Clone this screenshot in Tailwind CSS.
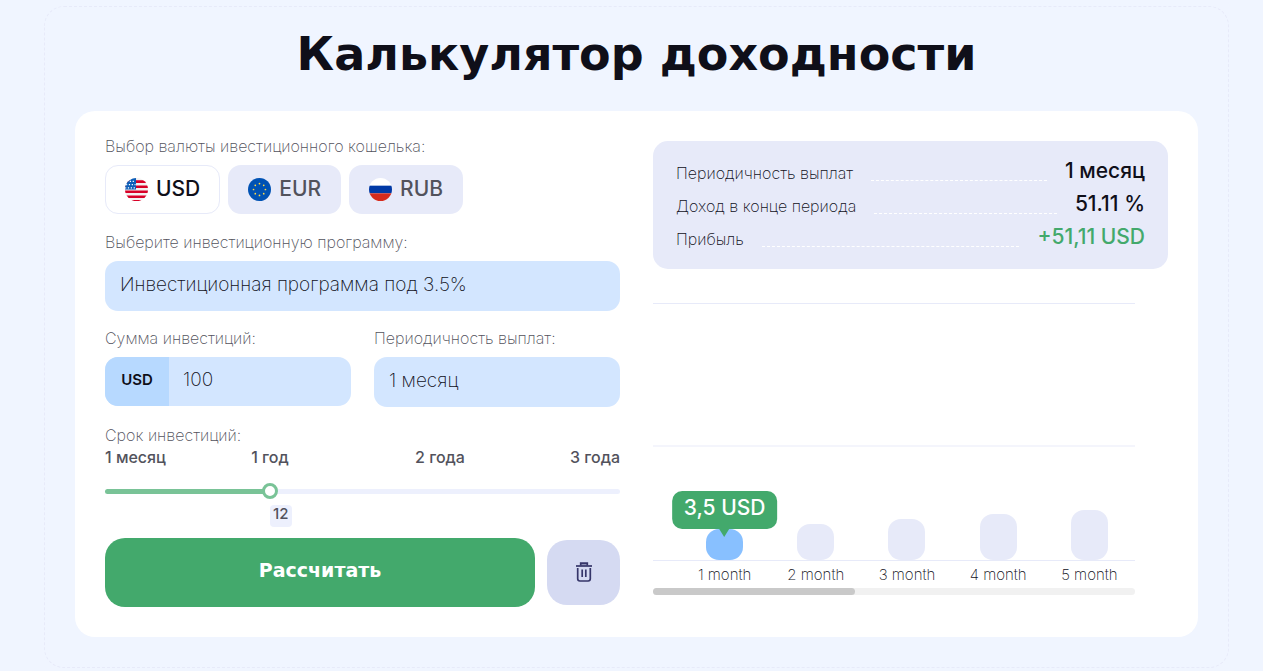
<!DOCTYPE html>
<html lang="ru">
<head>
  <meta charset="UTF-8" />
  <meta name="viewport" content="width=device-width, initial-scale=1.0" />
  <title>Калькулятор доходности</title>
  <script src="https://cdn.jsdelivr.net/npm/@tailwindcss/browser@4"></script>
</head>
<body class="bg-[#f0f5ff] min-h-screen font-['Inter',sans-serif] text-[#0f0f19] pt-[6px] pb-[3px] pl-11 pr-[34px]">

  <section class="border border-dashed border-[#e7eaf9] rounded-[20px] px-[30px] pb-[30px] pt-5">
    <h1 class="font-['DejaVu_Sans',sans-serif] font-bold text-[46px] leading-[54px] text-center mb-[30px]">Калькулятор доходности</h1>

    <div class="bg-white rounded-[20px] p-[30px] grid grid-cols-2 gap-[33px]">

      <!-- Form -->
      <form class="flex flex-col" onsubmit="return false">
        <fieldset>
          <legend class="font-extralight text-base leading-[10px] text-[#52525c] mb-[14px]">Выбор валюты ивестиционного кошелька:</legend>
          <div class="flex gap-2 text-[21px] font-medium">
            <label class="h-[49px] px-[19px] pb-[2px] flex items-center gap-2 rounded-[13px] border border-[#e7eaf9] cursor-pointer">
              <input type="radio" name="currency" value="USD" class="sr-only" checked />
              <svg class="w-[23px] h-[23px] mt-[2px]" viewBox="0 0 24 24">
                <clipPath id="us"><circle cx="12" cy="12" r="12" /></clipPath>
                <g clip-path="url(#us)">
                  <rect width="24" height="24" fill="#f3f0f0" />
                  <path d="M0 2.4h24v2.7H0zM0 7.7h24v2.7H0zM0 13h24v2.7H0zM0 18.2h24v2.7H0zM0 23h24v1H0z" fill="#d80027" />
                  <rect width="11.5" height="12" fill="#0d5eb8" />
                  <path d="M2 3.5h9M1 7h10M0 10.4h11" stroke="#fff" stroke-width="1.3" stroke-dasharray="1.3 1.7" />
                </g>
              </svg>
              USD
            </label>
            <label class="h-[49px] px-5 pb-[2px] flex items-center gap-2 rounded-[13px] bg-[#e7eaf9] text-[#52525c] cursor-pointer">
              <input type="radio" name="currency" value="EUR" class="sr-only" />
              <svg class="w-[23px] h-[23px] mt-[2px]" viewBox="0 0 24 24">
                <circle cx="12" cy="12" r="12" fill="#0052b4" />
                <g fill="#ffda44">
                  <circle cx="12" cy="5.8" r=".9" /><circle cx="16.4" cy="7.6" r=".9" />
                  <circle cx="18.2" cy="12" r=".9" /><circle cx="16.4" cy="16.4" r=".9" />
                  <circle cx="12" cy="18.2" r=".9" /><circle cx="7.6" cy="16.4" r=".9" />
                  <circle cx="5.8" cy="12" r=".9" /><circle cx="7.6" cy="7.6" r=".9" />
                </g>
              </svg>
              EUR
            </label>
            <label class="h-[49px] px-5 pb-[2px] flex items-center gap-2 rounded-[13px] bg-[#e7eaf9] text-[#52525c] cursor-pointer">
              <input type="radio" name="currency" value="RUB" class="sr-only" />
              <svg class="w-[23px] h-[23px] mt-[2px]" viewBox="0 0 24 24">
                <clipPath id="ru"><circle cx="12" cy="12" r="12" /></clipPath>
                <g clip-path="url(#ru)">
                  <rect width="24" height="24" fill="#fff" />
                  <rect y="8" width="24" height="8" fill="#0039a6" />
                  <rect y="16" width="24" height="8" fill="#d52b1e" />
                </g>
              </svg>
              RUB
            </label>
          </div>
        </fieldset>

        <label for="program" class="font-extralight text-base leading-[10px] text-[#52525c] mt-[23px] mb-[14px]">Выберите инвестиционную программу:</label>
        <select id="program" class="appearance-none h-[50px] px-[15px] pb-[2px] rounded-[13px] bg-[#d3e6ff] font-extralight text-[19px]">
          <option>Инвестиционная программа под 3.5%</option>
        </select>

        <div class="grid grid-cols-2 gap-[23px] mt-[22px]">
          <div class="flex flex-col">
            <label for="amount" class="font-extralight text-base leading-[10px] text-[#52525c] mb-[14px]">Сумма инвестиций:</label>
            <div class="flex h-[49px] rounded-[13px] overflow-hidden bg-[#d3e6ff]">
              <span class="w-16 shrink-0 pb-[2px] flex items-center justify-center bg-[#b7d9ff] font-semibold text-[15px]">USD</span>
              <input id="amount" type="text" value="100" class="w-full min-w-0 px-[14px] pb-[2px] font-extralight text-[19px] outline-none" />
            </div>
          </div>
          <div class="flex flex-col">
            <label for="period" class="font-extralight text-base leading-[10px] text-[#52525c] mb-[14px]">Периодичность выплат:</label>
            <select id="period" class="appearance-none h-[50px] px-[15px] pb-[2px] rounded-[13px] bg-[#d3e6ff] font-extralight text-[19px]">
              <option>1 месяц</option>
            </select>
          </div>
        </div>

        <label for="term" class="font-extralight text-base leading-3 text-[#52525c] mt-[22px]">Срок инвестиций:</label>
        <div class="grid grid-cols-[80fr_170fr_170fr_95fr] mt-2 font-medium text-base leading-4 text-[#52525c] whitespace-nowrap">
          <span>1 месяц</span>
          <span class="text-center">1 год</span>
          <span class="text-center">2 года</span>
          <span class="text-right">3 года</span>
        </div>
        <div class="relative mt-[18px] h-4">
          <input id="term" type="range" min="1" max="36" value="12" class="block w-full h-4 appearance-none bg-transparent [&::-webkit-slider-runnable-track]:h-[5px] [&::-webkit-slider-runnable-track]:rounded-full [&::-webkit-slider-runnable-track]:bg-linear-to-r [&::-webkit-slider-runnable-track]:from-[#79c397] [&::-webkit-slider-runnable-track]:from-32% [&::-webkit-slider-runnable-track]:to-[#edf0fd] [&::-webkit-slider-runnable-track]:to-32% [&::-webkit-slider-thumb]:appearance-none [&::-webkit-slider-thumb]:size-4 [&::-webkit-slider-thumb]:-mt-[6px] [&::-webkit-slider-thumb]:rounded-full [&::-webkit-slider-thumb]:bg-white [&::-webkit-slider-thumb]:border-3 [&::-webkit-slider-thumb]:border-[#79c397]" />
          <output for="term" class="absolute left-[32%] top-[22px] h-[22px] w-[22px] text-center rounded bg-[#edf0fd] font-medium text-[15px] leading-[18px] text-[#52525c]">12</output>
        </div>

        <div class="flex items-center gap-3 mt-[39px]">
          <button type="submit" class="flex-1 h-[69px] pb-1 rounded-[20px] bg-[#43a96c] text-white font-['DejaVu_Sans',sans-serif] font-bold text-[19px]">Рассчитать</button>
          <button type="reset" aria-label="Очистить" class="w-[73px] h-[65px] pb-[2px] rounded-[20px] bg-[#d5daf2] text-[#36366a] flex items-center justify-center">
            <svg class="w-4 h-5" viewBox="0 0 16 20" fill="none" stroke="currentColor" stroke-width="1.7">
              <path d="M0 4h16" />
              <path d="M4.7 3.6V1.2h6.6v2.4" fill="currentColor" fill-opacity=".45" />
              <path d="M1.7 6v10.8q0 2.200 2.200 2.200h8.200q2.200 0 2.200-2.200V6" />
              <path d="M6.200 7.500v7.500M9.800 7.500v7.500" />
            </svg>
          </button>
        </div>
      </form>

      <!-- Result -->
      <div>
        <dl class="bg-[#e7eaf9] rounded-[15px] px-[23px] pt-[13px] pb-4">
          <div class="flex h-[33px]">
            <dt class="font-extralight text-base leading-[38px]">Периодичность выплат</dt>
            <dd class="contents">
              <span class="flex-1 self-end mb-[6px] mx-[18px] border-b border-dashed border-white"></span>
              <span class="font-medium text-[21px] leading-[34px]">1 месяц</span>
            </dd>
          </div>
          <div class="flex h-[33px]">
            <dt class="font-extralight text-base leading-[38px]">Доход в конце периода</dt>
            <dd class="contents">
              <span class="flex-1 self-end mb-[6px] mx-[18px] border-b border-dashed border-white"></span>
              <span class="font-medium text-[21px] leading-[34px]">51.11 %</span>
            </dd>
          </div>
          <div class="flex h-[33px]">
            <dt class="font-extralight text-base leading-[38px]">Прибыль</dt>
            <dd class="contents">
              <span class="flex-1 self-end mb-[6px] mx-[18px] border-b border-dashed border-white"></span>
              <span class="font-medium text-[21px] leading-[34px] text-[#43a96c]">+51,11 USD</span>
            </dd>
          </div>
        </dl>

        <!-- Chart -->
        <div class="mt-[34px] mr-[33px]">
          <div class="h-[142px] border-t border-[#e7eaf9]"></div>
          <div class="h-[116px] border-t-2 border-t-[#f4f5fc] border-b border-b-[#e7eaf9] pl-[26px] grid grid-cols-5 items-end justify-items-center">
            <div class="relative w-[37px] h-[31px] rounded-[13px] bg-[#88c0ff]">
              <div class="absolute bottom-full left-1/2 -translate-x-1/2 h-[38px] px-3 rounded-[10px] bg-[#43a96c] text-white font-medium text-[21px] leading-[34px] whitespace-nowrap">
                3,5 USD
                <span class="absolute left-1/2 top-full -translate-x-1/2 border-x-5 border-x-transparent border-t-8 border-t-[#43a96c]"></span>
              </div>
            </div>
            <div class="w-[37px] h-9 rounded-[13px] bg-[#e7eaf9]"></div>
            <div class="w-[37px] h-[41px] rounded-[13px] bg-[#e7eaf9]"></div>
            <div class="w-[37px] h-[46px] rounded-[13px] bg-[#e7eaf9]"></div>
            <div class="w-[37px] h-[50px] rounded-[13px] bg-[#e7eaf9]"></div>
          </div>
          <div class="pl-[26px] mt-[5px] grid grid-cols-5 font-extralight text-[15px] leading-[18px] text-center whitespace-nowrap">
            <span>1 month</span>
            <span>2 month</span>
            <span>3 month</span>
            <span>4 month</span>
            <span>5 month</span>
          </div>
          <div class="mt-1 h-[7px] rounded-full bg-[#f1f1f1]">
            <div class="w-[42%] h-full rounded-full bg-[#c9c9c9]"></div>
          </div>
        </div>
      </div>

    </div>
  </section>

</body>
</html>
